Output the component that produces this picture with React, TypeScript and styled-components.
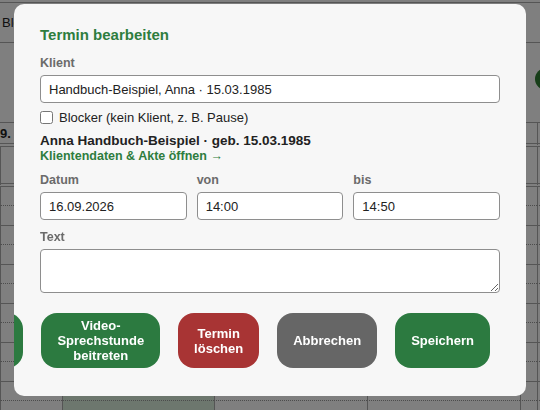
import React, { useState } from 'react'
import styled, { createGlobalStyle } from 'styled-components'

const GlobalStyle = createGlobalStyle`
  html, body {
    margin: 0;
    padding: 0;
    background: #ffffff;
    font-family: 'Liberation Sans', Arial, sans-serif;
  }
  * {
    box-sizing: border-box;
  }
`

// --- page behind the dialog ---

const Page = styled.div`
  width: 540px;
  height: 410px;
  overflow: hidden;
  color: #222;
`

const TopBar = styled.div`
  margin-top: 2px;
  height: 41px;
  border-top: 1px solid #aaa;
  border-bottom: 1px solid #aaa;
  display: flex;
  align-items: center;
  padding-left: 2px;
  font-size: 13px;
`

const Header = styled.div`
  height: 80px;
  border-bottom: 1px solid #aaa;
  display: flex;
  align-items: center;
  justify-content: flex-end;
  padding-bottom: 8px;
`

const RoundButton = styled.div`
  width: 22px;
  height: 22px;
  border-radius: 50%;
  background: #2e7d32;
  margin-right: -17px;
  flex-shrink: 0;
`

const CalendarGrid = styled.div`
  display: grid;
  grid-template-columns: 62px 152px 153px 153px 17px 1fr;
`

const Cell = styled.div<{ $height: number; $line: 'solid' | 'dotted' | 'double'; $tint?: boolean }>`
  height: ${(p) => p.$height}px;
  border-left: 1px solid #aaa;
  border-bottom: ${(p) =>
    p.$line === 'double' ? '4px double #aaa' : p.$line === 'dotted' ? '1px dotted #999' : '1px solid #aaa'};
  background: ${(p) => (p.$tint ? '#dbeedd' : 'transparent')};
  font-size: 13px;
  font-weight: bold;
  padding-top: 3px;
  &:first-child {
    border-left: none;
  }
`

const Overlay = styled.div`
  position: fixed;
  inset: 0;
  background: rgba(0, 0, 0, 0.5);
  display: flex;
  align-items: center;
  justify-content: center;
  padding: 4px 14px 14px;
`

// --- dialog ---

const Modal = styled.div`
  width: 512px;
  background: #f7f7f7;
  border-radius: 10px;
  padding: 22px 26px 28px;
  overflow: hidden;
`

const Title = styled.h2`
  margin: 0 0 12px;
  font-size: 15px;
  line-height: 18px;
  font-weight: bold;
  color: #2e7d3e;
`

const Label = styled.div`
  font-size: 12.5px;
  line-height: 15px;
  font-weight: bold;
  color: #6b6b6b;
  margin-bottom: 4px;
`

const TextInput = styled.input`
  display: block;
  width: 100%;
  height: 28px;
  border: 1px solid #8e8e8e;
  border-radius: 4px;
  background: #fff;
  padding: 0 8px;
  font-family: inherit;
  font-size: 13px;
  color: #222;
  outline: none;
`

const TextArea = styled.textarea`
  display: block;
  width: 100%;
  height: 44px;
  border: 1px solid #8e8e8e;
  border-radius: 4px;
  background: #fff;
  padding: 6px 8px;
  font-family: inherit;
  font-size: 13px;
  resize: vertical;
  outline: none;
`

const CheckRow = styled.label`
  display: flex;
  align-items: center;
  gap: 6px;
  margin-top: 7px;
  height: 15px;
  font-size: 13px;
  color: #222;

  input {
    margin: 0;
    width: 13px;
    height: 13px;
  }
`

const ClientInfo = styled.div`
  margin-top: 7px;
`

const ClientName = styled.div`
  font-size: 13.5px;
  line-height: 17px;
  font-weight: bold;
  color: #222;
`

const ClientLink = styled.a`
  display: block;
  font-size: 12.5px;
  line-height: 15px;
  font-weight: bold;
  color: #2e7d3e;
  text-decoration: none;
`

const TimeGrid = styled.div`
  display: grid;
  grid-template-columns: repeat(3, 1fr);
  gap: 10px;
  margin-top: 9px;
`

const Field = styled.div<{ $top?: number }>`
  margin-top: ${(p) => p.$top ?? 0}px;
`

const Actions = styled.div`
  display: flex;
  justify-content: flex-end;
  gap: 18px;
  margin-top: 20px;
  padding-right: 10px;
`

const ActionButton = styled.button<{ $tone: 'green' | 'red' | 'gray' }>`
  min-height: 55px;
  padding: 0 16px;
  border: none;
  border-radius: 16px;
  font-family: inherit;
  font-size: 13px;
  line-height: 15px;
  font-weight: bold;
  color: #fff;
  text-align: center;
  background: ${(p) => (p.$tone === 'green' ? '#2c7a40' : p.$tone === 'red' ? '#a83434' : '#666666')};
`

const halfRows = Array.from({ length: 12 }, (_, i) => i)

export default function App() {
  const [client, setClient] = useState('Handbuch-Beispiel, Anna · 15.03.1985')
  const [blocker, setBlocker] = useState(false)
  const [date, setDate] = useState('16.09.2026')
  const [from, setFrom] = useState('14:00')
  const [to, setTo] = useState('14:50')
  const [text, setText] = useState('')

  return (
    <>
      <GlobalStyle />
      <Page>
        <TopBar>Blocker</TopBar>
        <Header>
          <RoundButton />
        </Header>
        <CalendarGrid>
          {[0, 1, 2, 3, 4, 5].map((c) => (
            <Cell key={`d${c}`} $height={24} $line="double">
              {c === 0 ? '9.' : ''}
            </Cell>
          ))}
          {[0, 1, 2, 3, 4, 5].map((c) => (
            <Cell key={`a${c}`} $height={40} $line="double" />
          ))}
          {halfRows.map((r) =>
            [0, 1, 2, 3, 4, 5].map((c) => (
              <Cell
                key={`${r}-${c}`}
                $height={r % 2 === 0 ? 19 : 20}
                $line={r % 2 === 0 ? 'dotted' : 'solid'}
                $tint={c === 1 && r >= 10}
              />
            ))
          )}
        </CalendarGrid>
      </Page>

      <Overlay>
        <Modal>
          <Title>Termin bearbeiten</Title>

          <Field>
            <Label>Klient</Label>
            <TextInput value={client} onChange={(e) => setClient(e.target.value)} />
          </Field>

          <CheckRow>
            <input type="checkbox" checked={blocker} onChange={(e) => setBlocker(e.target.checked)} />
            Blocker (kein Klient, z. B. Pause)
          </CheckRow>

          <ClientInfo>
            <ClientName>Anna Handbuch-Beispiel · geb. 15.03.1985</ClientName>
            <ClientLink href="#">Klientendaten &amp; Akte öffnen →</ClientLink>
          </ClientInfo>

          <TimeGrid>
            <Field>
              <Label>Datum</Label>
              <TextInput value={date} onChange={(e) => setDate(e.target.value)} />
            </Field>
            <Field>
              <Label>von</Label>
              <TextInput value={from} onChange={(e) => setFrom(e.target.value)} />
            </Field>
            <Field>
              <Label>bis</Label>
              <TextInput value={to} onChange={(e) => setTo(e.target.value)} />
            </Field>
          </TimeGrid>

          <Field $top={10}>
            <Label>Text</Label>
            <TextArea value={text} onChange={(e) => setText(e.target.value)} />
          </Field>

          <Actions>
            <ActionButton $tone="green">Erinnerung senden</ActionButton>
            <ActionButton $tone="green">Video-Sprechstunde beitreten</ActionButton>
            <ActionButton $tone="red">Termin löschen</ActionButton>
            <ActionButton $tone="gray">Abbrechen</ActionButton>
            <ActionButton $tone="green">Speichern</ActionButton>
          </Actions>
        </Modal>
      </Overlay>
    </>
  )
}
